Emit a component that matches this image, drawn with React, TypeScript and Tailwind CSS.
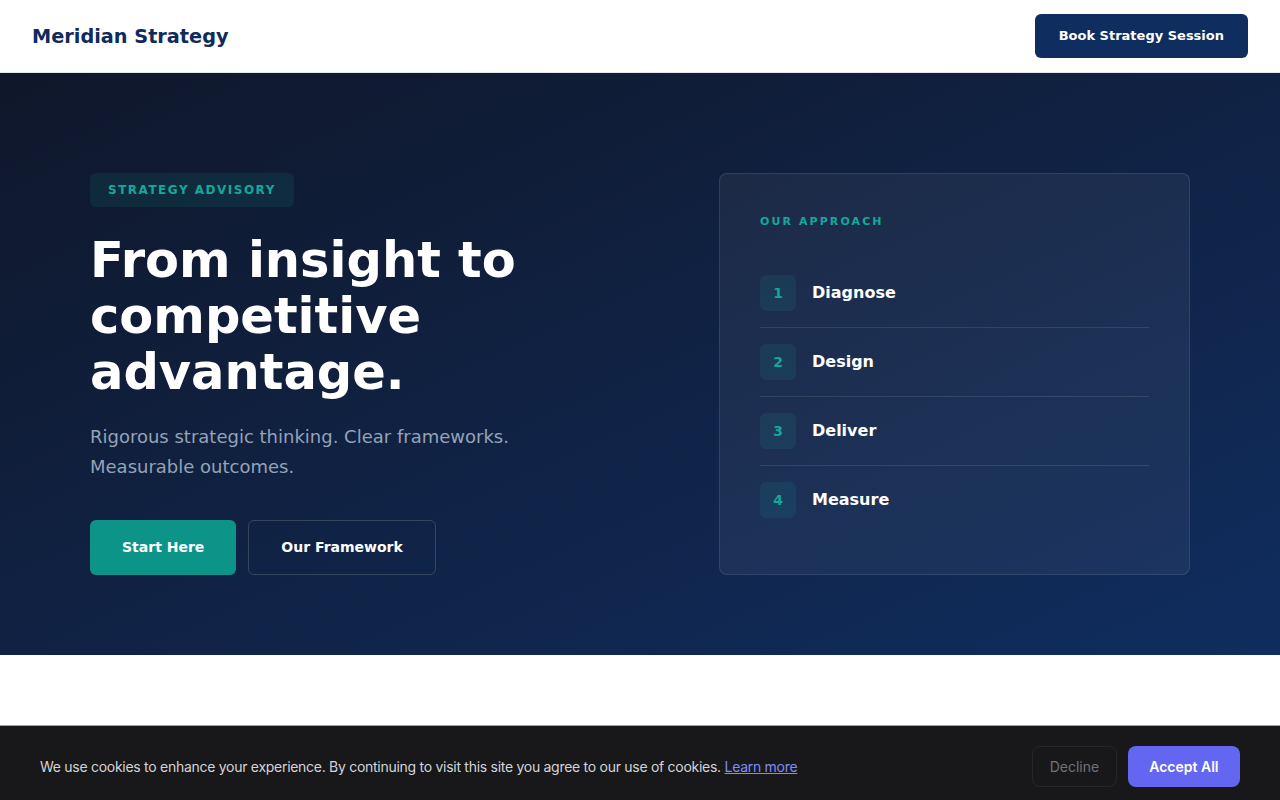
export default function App() {
  const steps = ["Diagnose", "Design", "Deliver", "Measure"];

  return (
    <div className="min-h-screen bg-white font-['DejaVu_Sans',sans-serif]">
      {/* Header */}
      <header className="flex h-[73px] items-center justify-between border-b border-slate-200 px-8">
        <span className="mt-[2px] text-[19.3px] font-bold text-[#0f2a5c]">Meridian Strategy</span>
        <button className="h-[44px] rounded-md bg-[#0f2d5e] px-6 text-[13px] font-bold text-white">
          Book Strategy Session
        </button>
      </header>

      {/* Hero */}
      <section className="bg-gradient-to-br from-[#0f172a] to-[#0f2d5f] px-[90px] pt-[100px] pb-[80px]">
        <div className="flex items-start justify-between">
          <div className="w-[560px]">
            <span className="inline-flex h-[34px] items-center rounded-md bg-[#14b8a6]/10 px-[18px] text-[12px] font-bold tracking-[0.125em] text-[#14a89a]">
              STRATEGY ADVISORY
            </span>
            <h1 className="mt-[25px] text-[49.5px] font-bold leading-[56px] text-white">
              From insight to competitive advantage.
            </h1>
            <p className="mt-[22px] max-w-[440px] text-[18px] leading-[30px] text-[#94a3b8]">
              Rigorous strategic thinking. Clear frameworks. Measurable outcomes.
            </p>
            <div className="mt-[38px] flex gap-3">
              <button className="h-[55px] rounded-md bg-[#0d9488] px-8 text-[14px] font-bold text-white">
                Start Here
              </button>
              <button className="h-[55px] rounded-md border border-[#475569]/70 px-8 text-[14px] font-bold text-white">
                Our Framework
              </button>
            </div>
          </div>

          <div className="w-[471px] rounded-lg border border-white/10 bg-white/5 px-10 pt-10 pb-10">
            <p className="text-[11px] font-bold leading-4 tracking-[0.19em] text-[#14a89a]">OUR APPROACH</p>
            <ul className="mt-[29px]">
              {steps.map((s, i) => (
                <li
                  key={s}
                  className={`flex items-center gap-4 py-4 ${i < steps.length - 1 ? "border-b border-white/10" : ""}`}
                >
                  <span className="flex h-9 w-9 items-center justify-center rounded-md bg-[#14b8a6]/10 text-[14px] font-bold text-[#14a89a]">
                    {i + 1}
                  </span>
                  <span className="text-[16px] font-bold text-white">{s}</span>
                </li>
              ))}
            </ul>
          </div>
        </div>
      </section>

      <div className="h-[70px]" />

      {/* Cookie banner */}
      <div className="fixed inset-x-0 bottom-0 flex h-[75px] items-center justify-between border-t border-[#a1a1aa] bg-[#18181b] px-10 pt-[6px] font-['Inter',sans-serif]">
        <p className="text-[14px] tracking-[-0.02em] text-[#d4d4d8]">
          We use cookies to enhance your experience. By continuing to visit this site you agree to our use of cookies.{" "}
          <a href="#" className="text-[#818cf8] underline">Learn more</a>
        </p>
        <div className="flex gap-[11px]">
          <button className="h-[41px] rounded-lg border border-[#27272a] px-[16.5px] text-[14px] text-[#71717a]">
            Decline
          </button>
          <button className="h-[41px] rounded-lg bg-[#6366f1] px-[21.5px] text-[14px] font-semibold text-white">
            Accept All
          </button>
        </div>
      </div>
    </div>
  );
}
